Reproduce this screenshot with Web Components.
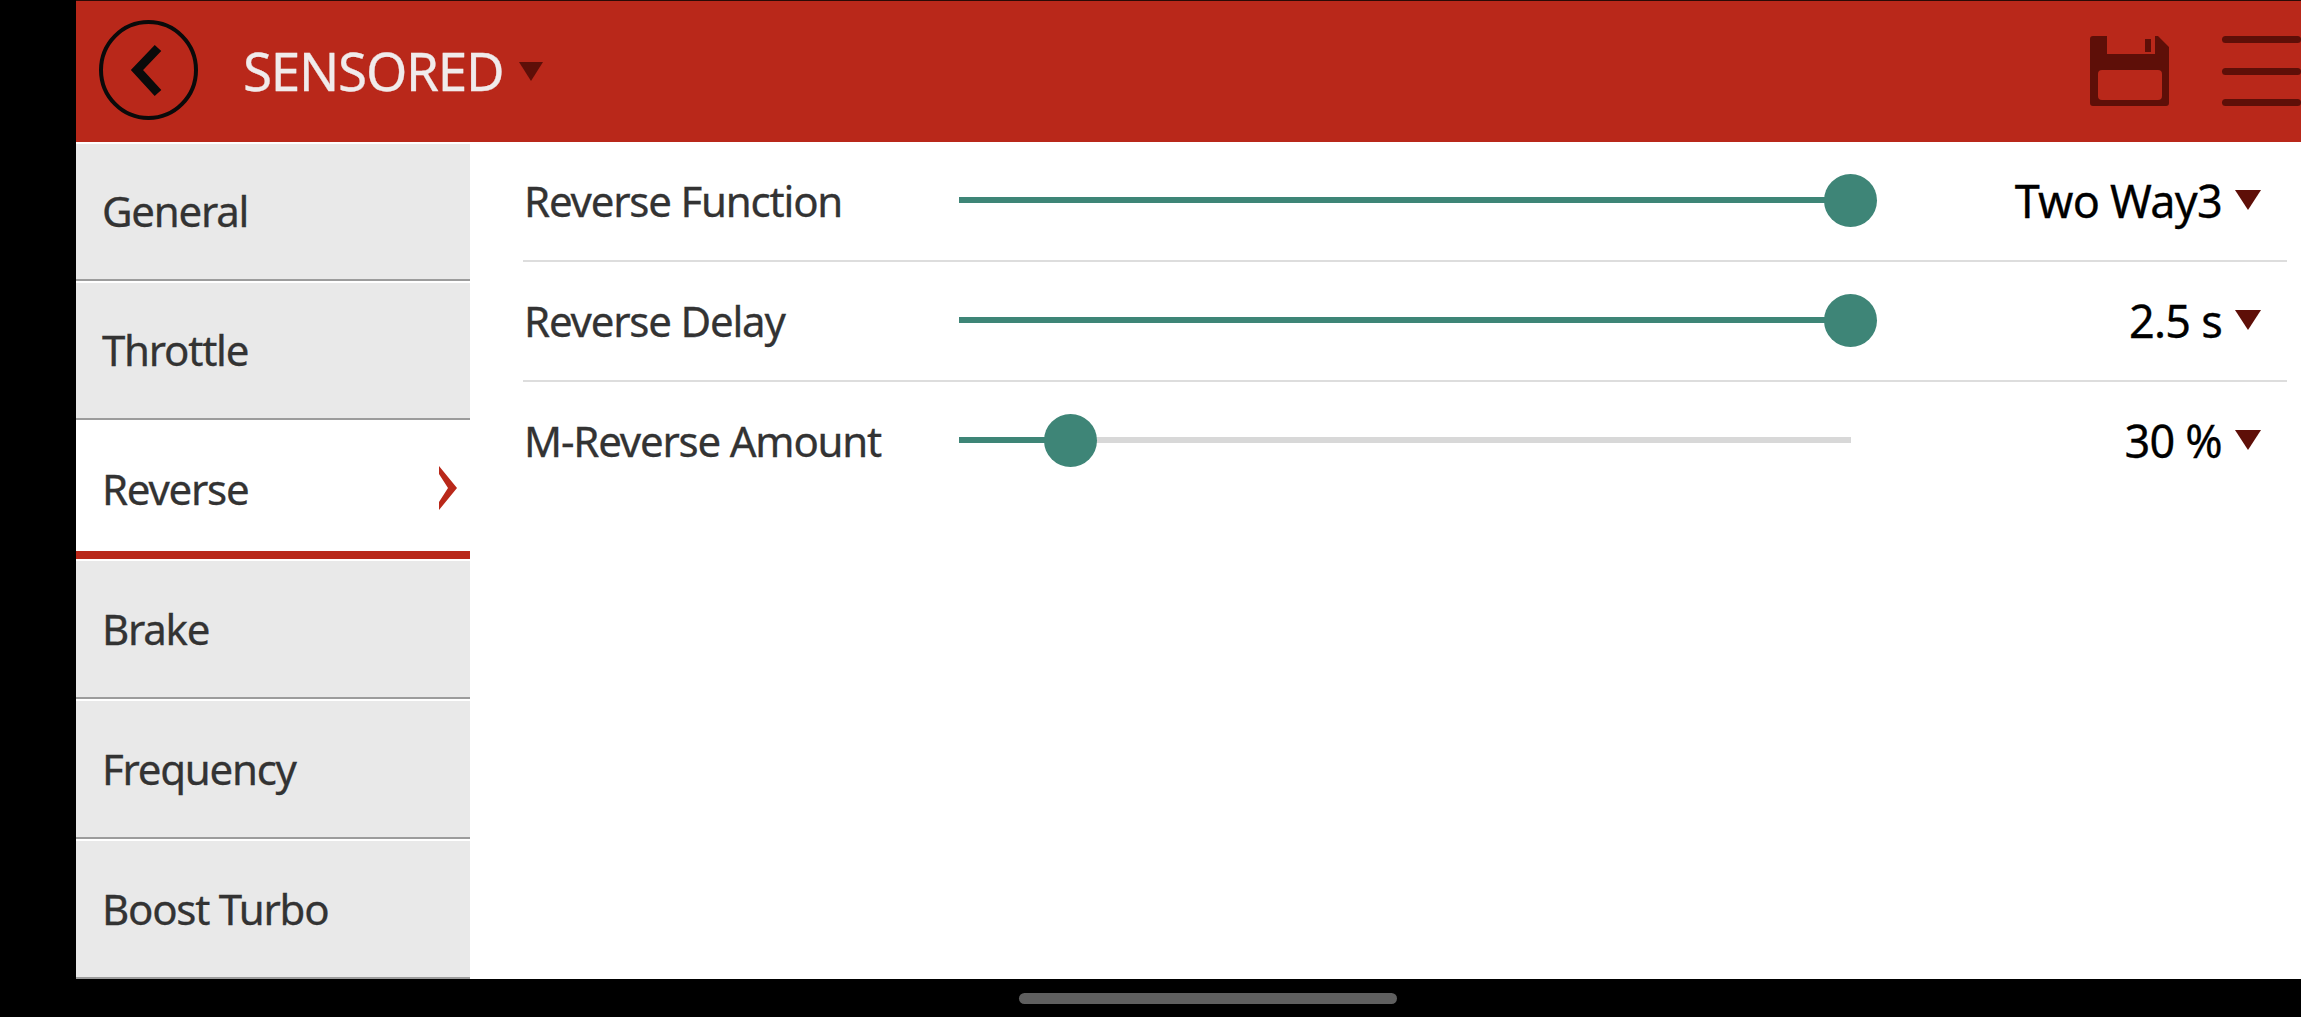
<!DOCTYPE html>
<html>
<head>
<meta charset="utf-8">
<title>Sensored</title>
<style>
  html, body { margin: 0; height: 100%; background: #000; overflow: hidden; }
  body { font-family: "Noto Sans", Roboto, sans-serif; -webkit-text-stroke: .3px; }
</style>
</head>
<body>
<esc-screen>
  <top-bar slot="top">SENSORED</top-bar>
  <side-menu slot="menu">
    <menu-item>General</menu-item>
    <menu-item>Throttle</menu-item>
    <menu-item active>Reverse</menu-item>
    <menu-item>Brake</menu-item>
    <menu-item>Frequency</menu-item>
    <menu-item>Boost Turbo</menu-item>
  </side-menu>
  <setting-row percent="100" value="Two Way3">Reverse Function</setting-row>
  <setting-row percent="100" value="2.5 s">Reverse Delay</setting-row>
  <setting-row percent="12.5" value="30 %" last>M-Reverse Amount</setting-row>
</esc-screen>

<script>
const screenTemplate = document.createElement('template')
screenTemplate.innerHTML = `
  <style>
    :host {
      display: flex;
      flex-direction: column;
      height: 1017px;
      padding-left: 76px;
      box-sizing: border-box;
      background: #000;
    }
    .main {
      display: grid;
      grid-template-columns: 394px 1fr;
      height: 837px;
      background: #fff;
    }
    .rows { padding: 0 14px 0 53px; }
    .home {
      height: 38px;
      padding: 14px 0 0 943px;
      box-sizing: border-box;
    }
    .home div {
      width: 378px;
      height: 11px;
      border-radius: 6px;
      background: #5f5f5f;
    }
  </style>
  <slot name="top"></slot>
  <div class="main">
    <slot name="menu"></slot>
    <div class="rows"><slot></slot></div>
  </div>
  <div class="home"><div></div></div>
`
class EscScreen extends HTMLElement {
  constructor() {
    super()
      .attachShadow({ mode: "open" })
      .append(screenTemplate.content.cloneNode(true))
  }
}

const barTemplate = document.createElement('template')
barTemplate.innerHTML = `
  <style>
    :host {
      display: flex;
      align-items: center;
      height: 142px;
      box-sizing: border-box;
      border-top: 1px solid #2a0a06;
      background: #b9281a;
      padding-left: 23px;
      color: #f0ebeb;
    }
    .back { width: 99px; height: 100px; margin-top: -4px; display: block; }
    .title { margin-left: 45px; font-size: 53px; letter-spacing: -1.25px; line-height: 60px; margin-top: -2px; }
    .arrow { margin-left: 16px; display: block; }
    .save { margin-left: auto; margin-top: -1px; display: block; }
    .burger {
      width: 79px;
      margin-left: 53px;
      margin-top: -1px;
      display: flex;
      flex-direction: column;
      gap: 24.5px;
    }
    .burger div { height: 7px; border-radius: 4px; background: #5e0f08; }
  </style>
  <svg class="back" viewBox="0 0 99 100">
    <ellipse cx="49.5" cy="50" rx="47.5" ry="48" fill="none" stroke="#0a0a0a" stroke-width="4"/>
    <path d="M59 28 L38 50 L59 73" fill="none" stroke="#0a0a0a" stroke-width="9"/>
  </svg>
  <span class="title"><slot></slot></span>
  <svg class="arrow" width="24" height="19"><path d="M0 0H24L12 19Z" fill="#5e0f08"/></svg>
  <svg class="save" width="79" height="70" viewBox="0 0 79 70">
    <path fill="#5e0f08" fill-rule="evenodd" d="M3 0H17V18H65V0H68L79 11V67Q79 70 76 70H3Q0 70 0 67V3Q0 0 3 0Z M12 34Q8 34 8 38V60Q8 64 12 64H68Q72 64 72 60V38Q72 34 68 34Z"/>
    <rect x="55" y="3" width="6" height="13" fill="#5e0f08"/>
  </svg>
  <div class="burger"><div></div><div></div><div></div></div>
`
class TopBar extends HTMLElement {
  constructor() {
    super()
      .attachShadow({ mode: "open" })
      .append(barTemplate.content.cloneNode(true))
  }
}

const menuTemplate = document.createElement('template')
menuTemplate.innerHTML = `
  <style>
    :host {
      display: flex;
      flex-direction: column;
      gap: 2px;
      padding-top: 2px;
      box-sizing: border-box;
      height: 837px;
    }
  </style>
  <slot></slot>
`
class SideMenu extends HTMLElement {
  constructor() {
    super()
      .attachShadow({ mode: "open" })
      .append(menuTemplate.content.cloneNode(true))
  }
}

const itemTemplate = document.createElement('template')
itemTemplate.innerHTML = `
  <style>
    :host {
      flex: 0 0 137px;
      display: flex;
      align-items: center;
      justify-content: space-between;
      box-sizing: border-box;
      padding: 0 13px 3px 26px;
      background: #e9e9e9;
      border-bottom: 2px solid #9c9c9c;
      color: #333;
      font-size: 42px;
      letter-spacing: -1.25px;
    }
    :host(:nth-child(n+4)) { flex-basis: 138px; padding-bottom: 2px; }
    :host([active]) {
      padding: 3px 13px 0 26px;
      background: #fff;
      border-bottom: 8px solid #b9281a;
    }
    svg { display: none; }
    :host([active]) svg { display: block; }
  </style>
  <span><slot></slot></span>
  <svg width="18" height="44"><path d="M0 0L18 22L0 44V36L9 22L0 8Z" fill="#b9281a"/></svg>
`
class MenuItem extends HTMLElement {
  constructor() {
    super()
      .attachShadow({ mode: "open" })
      .append(itemTemplate.content.cloneNode(true))
  }
}

const sliderTemplate = document.createElement('template')
sliderTemplate.innerHTML = `
  <style>
    :host {
      display: block;
      position: relative;
      height: 6px;
      background: #d8d8d8;
    }
    .fill { height: 6px; background: #3e8577; }
    .thumb {
      position: absolute;
      top: -23.5px;
      width: 53px;
      height: 53px;
      margin-left: -27px;
      border-radius: 50%;
      background: #3e8577;
    }
  </style>
  <div class="fill"></div>
  <div class="thumb"></div>
`
class ValueSlider extends HTMLElement {
  static get observedAttributes() { return ["percent"] }

  constructor() {
    super()
      .attachShadow({ mode: "open" })
      .append(sliderTemplate.content.cloneNode(true))
  }

  attributeChangedCallback(name, oldValue, newValue) {
    this.shadowRoot.querySelector(".fill").style.width = newValue + "%"
    this.shadowRoot.querySelector(".thumb").style.left = newValue + "%"
  }
}

const rowTemplate = document.createElement('template')
rowTemplate.innerHTML = `
  <style>
    :host {
      display: grid;
      grid-template-columns: 436px 892px 1fr;
      align-items: center;
      height: 120px;
      box-sizing: border-box;
      padding-bottom: 2px;
      border-bottom: 2px solid #ddd;
    }
    :host([last]) { border-bottom: 0; height: 118px; }
    .label { padding-left: 1px; color: #333; font-size: 42px; letter-spacing: -1.2px; }
    .value {
      display: flex;
      justify-content: flex-end;
      align-items: center;
      padding-right: 26px;
      color: #000;
      font-size: 45px;
      letter-spacing: -0.75px;
    }
    .value svg { margin-left: 13px; display: block; }
  </style>
  <span class="label"><slot></slot></span>
  <value-slider></value-slider>
  <div class="value">
    <span id="value"></span>
    <svg width="26" height="20"><path d="M0 0H26L13 20Z" fill="#5e0f08"/></svg>
  </div>
`
class SettingRow extends HTMLElement {
  constructor() {
    super()
      .attachShadow({ mode: "open" })
      .append(rowTemplate.content.cloneNode(true))
  }

  connectedCallback() {
    this.shadowRoot.querySelector("value-slider").setAttribute("percent", this.getAttribute("percent"))
    this.shadowRoot.querySelector("#value").textContent = this.getAttribute("value")
  }
}

window.customElements.define('value-slider', ValueSlider)
window.customElements.define('esc-screen', EscScreen)
window.customElements.define('top-bar', TopBar)
window.customElements.define('side-menu', SideMenu)
window.customElements.define('menu-item', MenuItem)
window.customElements.define('setting-row', SettingRow)
</script>
</body>
</html>
